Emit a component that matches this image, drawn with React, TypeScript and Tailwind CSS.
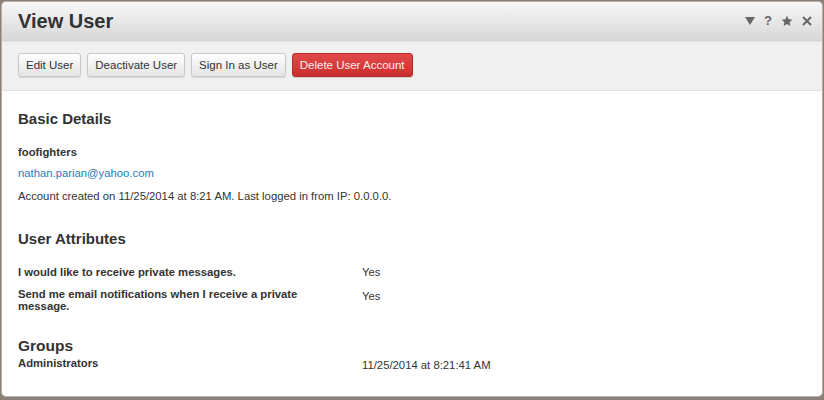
import React from "react";

const font = { fontFamily: '"Liberation Sans", Arial, Helvetica, sans-serif' };

function Btn({ children }: { children: React.ReactNode }) {
  return (
    <button className="h-[24px] px-[7px] rounded-[3px] border border-[#c8c8c8] bg-gradient-to-b from-[#ffffff] to-[#e4e4e4] text-[11.5px] text-[#333] leading-[22px] shadow-[0_1px_1px_rgba(0,0,0,0.12)]">
      {children}
    </button>
  );
}

export default function App() {
  return (
    <div className="w-[824px] h-[400px] bg-[#8a8178] pt-[1px] px-[1px] overflow-hidden" style={font}>
      <div className="h-[396px] rounded-[5px] border border-[#b5b0aa] bg-white overflow-hidden flex flex-col text-[#333]">
        <div className="h-[39px] shrink-0 bg-gradient-to-b from-[#f8f8f8] to-[#d6d6d6] flex items-center justify-between pl-[16px] pr-[10px]">
          <h1 className="text-[20px] font-bold text-[#333] leading-[24px] mt-[-1px]">View User</h1>
          <div className="flex items-center gap-[9px] text-[#666] mt-[-1px]">
            <svg width="10" height="8" viewBox="0 0 10 8"><path d="M0 0 L10 0 L5 8 Z" fill="#666" /></svg>
            <span className="text-[13px] font-bold leading-[14px] w-[8px] text-center">?</span>
            <svg width="12" height="12" viewBox="0 0 24 24"><path d="M12 1.5l3.2 7 7.6.8-5.7 5.1 1.6 7.5L12 18l-6.7 3.9 1.6-7.5L1.2 9.3l7.6-.8z" fill="#666" /></svg>
            <svg width="10" height="10" viewBox="0 0 10 10"><path d="M1 1 L9 9 M9 1 L1 9" stroke="#666" strokeWidth="2" /></svg>
          </div>
        </div>
        <div className="h-[50px] shrink-0 bg-[#f0f0f0] border-t border-[#e2e2e2] border-b border-[#dcdcdc] flex items-start pt-[11px] pl-[16px] gap-[6px]">
          <Btn>Edit User</Btn>
          <Btn>Deactivate User</Btn>
          <Btn>Sign In as User</Btn>
          <button className="h-[24px] px-[7px] rounded-[3px] border border-[#b52b27] bg-gradient-to-b from-[#e2494a] to-[#c92f2c] text-[11.5px] text-[#fdf0ee] leading-[22px] shadow-[0_1px_1px_rgba(0,0,0,0.15)]">
            Delete User Account
          </button>
        </div>
        <div className="pl-[16px] pt-[18px]">
          <h2 className="text-[15px] font-bold leading-[20px] text-[#333]">Basic Details</h2>
          <p className="mt-[13px] text-[11.3px] font-bold leading-[20px]">foofighters</p>
          <p className="mt-[1px] text-[11.3px] leading-[20px] text-[#2b7bb9]">nathan.parian@yahoo.com</p>
          <p className="mt-[3px] text-[11.3px] leading-[20px]">
            Account created on 11/25/2014 at 8:21 AM. Last logged in from IP: 0.0.0.0.
          </p>
          <h2 className="mt-[23px] text-[15px] font-bold leading-[20px]">User Attributes</h2>
          <div className="mt-[13px] grid grid-cols-[344px_1fr] items-start">
            <p className="text-[11.3px] font-bold leading-[20px] pr-[30px]">I would like to receive private messages.</p>
            <p className="text-[11.3px] leading-[20px]">Yes</p>
          </div>
          <div className="mt-[6px] grid grid-cols-[344px_1fr] items-start">
            <p className="text-[11.3px] font-bold leading-[12px] pr-[30px] pt-0">
              Send me email notifications when I receive a private message.
            </p>
            <p className="text-[11.3px] leading-[16px]">Yes</p>
          </div>
          <h2 className="mt-[24px] text-[15.5px] font-bold leading-[20px]">Groups</h2>
          <div className="grid grid-cols-[344px_1fr] items-start">
            <p className="text-[11.3px] font-bold leading-[14px]">Administrators</p>
            <p className="text-[11.3px] leading-[14px] pt-[2px]">11/25/2014 at 8:21:41 AM</p>
          </div>
        </div>
      </div>
    </div>
  );
}
